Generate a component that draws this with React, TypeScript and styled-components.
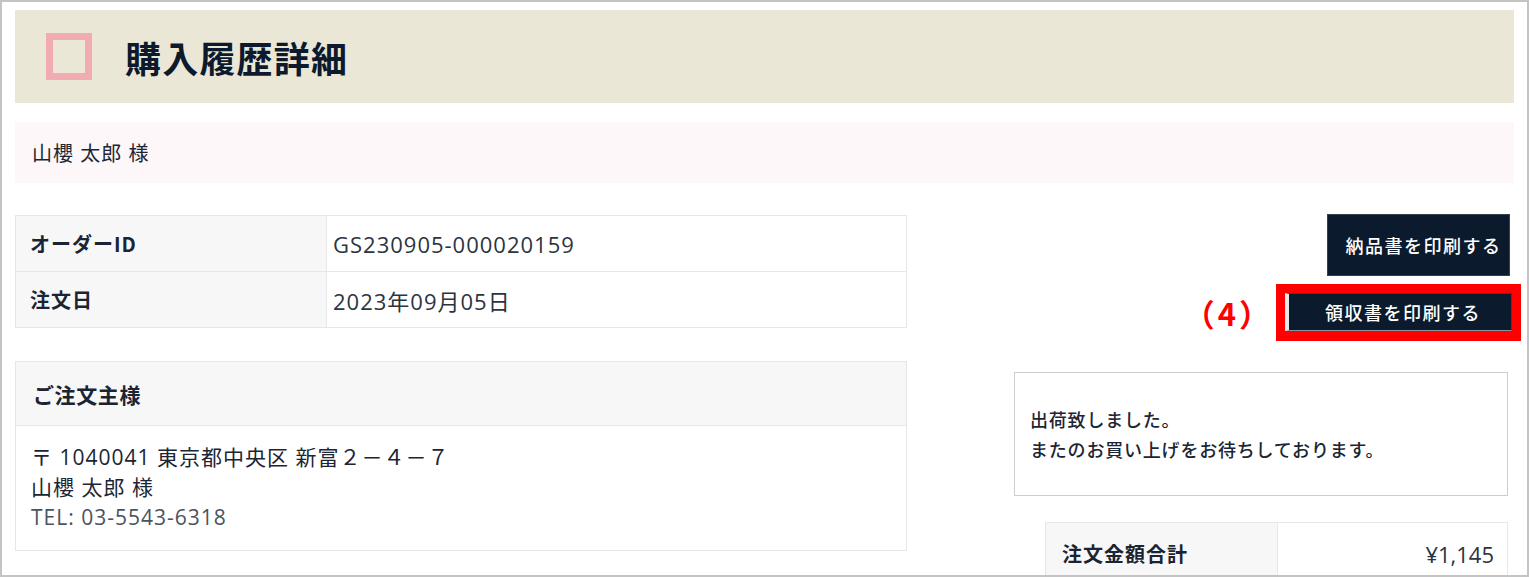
import React from "react";
import styled, { createGlobalStyle } from "styled-components";

const GlobalStyle = createGlobalStyle`
  html, body { margin: 0; padding: 0; background: #ffffff; }
  body { font-family: "Open Sans", "Noto Sans CJK JP", sans-serif; color: #15202e; }
  * { box-sizing: border-box; }
`;

const Frame = styled.div`
  width: 1529px;
  height: 577px;
  border: 2px solid #c4c4c4;
  padding: 8px 13px 0 13px;
  overflow: hidden;
  background: #ffffff;
`;

const Header = styled.header`
  height: 93px;
  background: #ebe7d6;
  display: flex;
  align-items: center;
  padding-left: 31px;
  gap: 33px;
`;

const Mark = styled.span`
  width: 46px;
  height: 47px;
  border: 7px solid #f2abb3;
  flex: none;
`;

const Title = styled.h1`
  margin: 0;
  font-family: "Noto Sans CJK JP", sans-serif;
  font-size: 36px;
  font-weight: 700;
  color: #0d1a2d;
  letter-spacing: 1.2px;
`;

const NameBand = styled.div`
  margin-top: 19px;
  height: 61px;
  background: #fdf7f9;
  display: flex;
  align-items: center;
  padding-left: 17px;
  font-size: 20px;
  letter-spacing: 1px;
  color: #1c2533;
`;

const Main = styled.div`
  margin-top: 31px;
  display: flex;
  justify-content: space-between;
  align-items: flex-start;
`;

const LeftCol = styled.div`
  width: 892px;
  padding-top: 1px;
  display: flex;
  flex-direction: column;
  gap: 33px;
`;

const InfoTable = styled.table`
  width: 100%;
  border-collapse: collapse;
  border: 1px solid #e7e7e7;
`;

const Row = styled.tr<{ $h?: number }>`
  height: ${(p) => p.$h ?? 56}px;
`;

const LabelCell = styled.th<{ $w: number; $pad?: number }>`
  width: ${(p) => p.$w}px;
  background: #f7f7f7;
  border: 1px solid #e7e7e7;
  text-align: left;
  padding: 0 0 0 ${(p) => p.$pad ?? 14}px;
  font-family: "Noto Sans CJK JP", sans-serif;
  font-size: 20px;
  font-weight: 700;
  letter-spacing: 1px;
  color: #1a2433;
`;

const ValueCell = styled.td<{ $align?: string; $pad?: string; $spacing?: number }>`
  border: 1px solid #e7e7e7;
  padding: ${(p) => p.$pad ?? "0 0 0 6px"};
  text-align: ${(p) => p.$align ?? "left"};
  font-size: 22px;
  letter-spacing: ${(p) => p.$spacing ?? 1}px;
  color: #2c3440;
  background: #ffffff;
`;

const Box = styled.section`
  border: 1px solid #e7e7e7;
`;

const BoxHead = styled.div`
  height: 64px;
  background: #f7f7f7;
  border-bottom: 1px solid #e7e7e7;
  display: flex;
  align-items: center;
  padding-left: 17px;
  font-family: "Noto Sans CJK JP", sans-serif;
  font-size: 21px;
  font-weight: 700;
  letter-spacing: 0.6px;
  color: #1a2433;
`;

const BoxBody = styled.div`
  padding: 16px 15px 18px;
  font-size: 21px;
  line-height: 30px;
  letter-spacing: 1px;
  color: #1c2533;
`;

const Line = styled.div<{ $muted?: boolean }>`
  color: ${(p) => (p.$muted ? "#4a5461" : "#1c2533")};
`;

const RightCol = styled.div`
  width: 496px;
  margin-right: 4px;
  display: flex;
  flex-direction: column;
  align-items: flex-end;
`;

const PrintButton = styled.button<{ $h: number; $w: number; $edge?: boolean }>`
  width: ${(p) => p.$w}px;
  height: ${(p) => p.$h}px;
  background: #0b1a2d;
  color: #ffffff;
  border: 1px solid #34404f;
  ${(p) => (p.$edge ? "border-left: 4px solid #ececec; border-bottom-color: #8b929c;" : "")}
  font-family: "Noto Sans CJK JP", sans-serif;
  font-size: 18px;
  font-weight: 500;
  letter-spacing: 1.5px;
  padding: 0 0 0 ${(p) => (p.$edge ? 6 : 10)}px;
  display: flex;
  align-items: center;
  justify-content: center;
  cursor: pointer;
`;

const AnnotRow = styled.div`
  margin-top: 8px;
  margin-right: -11px;
  display: flex;
  align-items: center;
`;

const AnnotLabel = styled.span`
  font-family: "Noto Sans CJK JP", sans-serif;
  font-size: 31px;
  font-weight: 700;
  letter-spacing: 3px;
  color: #ff0000;
  margin-right: 3px;
`;

const Highlight = styled.div`
  border: 9px solid #ff0000;
  border-bottom-width: 10px;
  display: flex;
`;

const Message = styled.div`
  margin-top: 31px;
  margin-right: 2px;
  width: 494px;
  height: 124px;
  border: 1px solid #cdcdcd;
  padding: 0 15px;
  display: flex;
  flex-direction: column;
  justify-content: center;
  font-family: "Noto Sans CJK JP", sans-serif;
  font-size: 18px;
  font-weight: 500;
  line-height: 30px;
  letter-spacing: 0.8px;
  color: #1c2533;
`;

const TotalTable = styled.table`
  margin-top: 26px;
  margin-right: 2px;
  width: 463px;
  border-collapse: collapse;
  border: 1px solid #e7e7e7;
`;

export default function App() {
  return (
    <>
      <GlobalStyle />
      <Frame>
        <Header>
          <Mark />
          <Title>購入履歴詳細</Title>
        </Header>
        <NameBand>山櫻 太郎 様</NameBand>
        <Main>
          <LeftCol>
            <InfoTable>
              <tbody>
                <Row>
                  <LabelCell $w={311}>オーダーID</LabelCell>
                  <ValueCell>GS230905-000020159</ValueCell>
                </Row>
                <Row>
                  <LabelCell $w={311}>注文日</LabelCell>
                  <ValueCell>2023年09月05日</ValueCell>
                </Row>
              </tbody>
            </InfoTable>
            <Box>
              <BoxHead>ご注文主様</BoxHead>
              <BoxBody>
                <Line>〒 1040041 東京都中央区 新富２－４－７</Line>
                <Line>山櫻 太郎 様</Line>
                <Line $muted>TEL: 03-5543-6318</Line>
              </BoxBody>
            </Box>
          </LeftCol>
          <RightCol>
            <PrintButton $w={183} $h={62}>納品書を印刷する</PrintButton>
            <AnnotRow>
              <AnnotLabel>（4）</AnnotLabel>
              <Highlight>
                <PrintButton $w={227} $h={38} $edge>領収書を印刷する</PrintButton>
              </Highlight>
            </AnnotRow>
            <Message>
              <div>出荷致しました。</div>
              <div>またのお買い上げをお待ちしております。</div>
            </Message>
            <TotalTable>
              <tbody>
                <Row $h={62}>
                  <LabelCell $w={232} $pad={16}>注文金額合計</LabelCell>
                  <ValueCell $align="right" $pad="0 13px 0 0" $spacing={0}>¥1,145</ValueCell>
                </Row>
              </tbody>
            </TotalTable>
          </RightCol>
        </Main>
      </Frame>
    </>
  );
}
